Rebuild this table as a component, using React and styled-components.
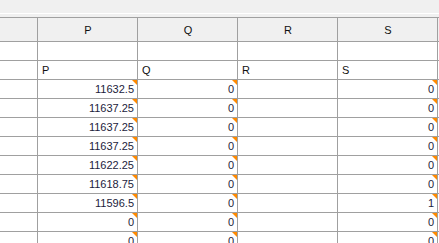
import React from "react";
import styled, { createGlobalStyle } from "styled-components";

const GlobalStyle = createGlobalStyle`
  body {
    margin: 0;
    background: #ffffff;
    font-family: "Liberation Sans", Arial, sans-serif;
    overflow: hidden;
  }
`;

const Page = styled.div`
  width: 439px;
  height: 243px;
  overflow: hidden;
  background: #ffffff;
`;

const TopBar = styled.div`
  height: 13px;
  background: #f0f0f0;
  border-bottom: 1px solid #ffffff;
`;

const Gap = styled.div`
  height: 3px;
  background: #f0f0f0;
  border-bottom: 1px solid #a0a0a0;
`;

const Row = styled.div`
  display: flex;
  height: ${(p) => p.$h}px;
  background: ${(p) => (p.$head ? "#f0f0f0" : "#ffffff")};
`;

const Cell = styled.div`
  position: relative;
  box-sizing: border-box;
  width: ${(p) => p.$w}px;
  flex: none;
  border-right: 1px solid #a0a0a0;
  border-bottom: 1px solid #a0a0a0;
  display: flex;
  align-items: center;
  justify-content: ${(p) =>
    p.$align === "right" ? "flex-end" : p.$align === "center" ? "center" : "flex-start"};
  padding: 0 3px 0 4px;
  font-size: 11px;
  color: ${(p) => (p.$head ? "#111111" : "#1c1c3c")};
  white-space: nowrap;
`;

const Rest = styled.div`
  flex: 1;
  border-bottom: 1px solid #a0a0a0;
`;

const Mark = styled.span`
  position: absolute;
  top: 0;
  right: 0;
  width: 0;
  height: 0;
  border-top: 5px solid #ff8a00;
  border-left: 5px solid transparent;
`;

const cols = ["P", "Q", "R", "S"];

const data = [
  ["11632.5", "0", "", "0"],
  ["11637.25", "0", "", "0"],
  ["11637.25", "0", "", "0"],
  ["11637.25", "0", "", "0"],
  ["11622.25", "0", "", "0"],
  ["11618.75", "0", "", "0"],
  ["11596.5", "0", "", "1"],
  ["0", "0", "", "0"],
  ["0", "0", "", "0"],
];

const App = () => (
  <Page>
    <GlobalStyle />
    <TopBar />
    <Gap />
    <Row $h={24} $head>
      <Cell $w={38} />
      {cols.map((c) => (
        <Cell key={c} $w={100} $align="center" $head>
          {c}
        </Cell>
      ))}
      <Rest />
    </Row>
    <Row $h={19}>
      <Cell $w={38} />
      {cols.map((c) => (
        <Cell key={c} $w={100} />
      ))}
      <Rest />
    </Row>
    <Row $h={19}>
      <Cell $w={38} />
      {cols.map((c) => (
        <Cell key={c} $w={100} $head>
          {c}
        </Cell>
      ))}
      <Rest />
    </Row>
    {data.map((r, i) => (
      <Row key={i} $h={19}>
        <Cell $w={38} />
        {r.map((v, j) => (
          <Cell key={j} $w={100} $align="right">
            {v}
            {v !== "" && <Mark />}
          </Cell>
        ))}
        <Rest />
      </Row>
    ))}
  </Page>
);

export default App;
